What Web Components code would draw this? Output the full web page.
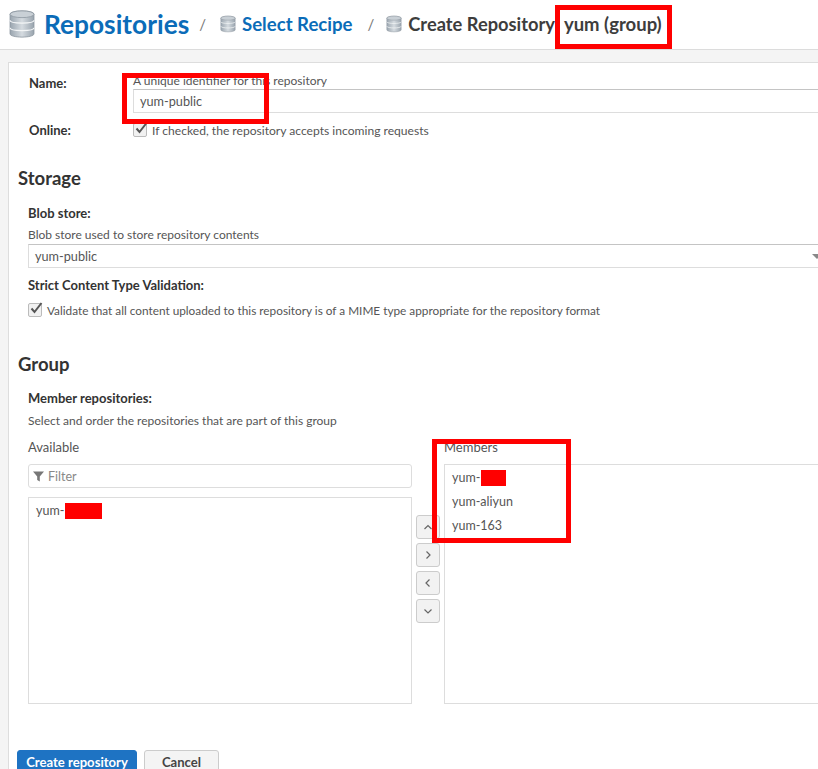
<!DOCTYPE html>
<html>
<head>
<meta charset="utf-8">
<title>Create Repository</title>
<style>
  html, body { margin: 0; padding: 0; height: 769px; overflow: hidden; background: #fff; }
  body { font-family: "Lato", "Liberation Sans", sans-serif; color: #444; }
</style>
</head>
<body>
<repo-page></repo-page>

<script>
const DB_ICON = `
  <svg viewBox="0 0 36 40" width="100%" height="100%">
    <defs>
      <linearGradient id="g" x1="0" x2="1" y1="0" y2="0">
        <stop offset="0" stop-color="#9aa5af"/><stop offset="0.5" stop-color="#d5dbe0"/><stop offset="1" stop-color="#99a4ae"/>
      </linearGradient>
    </defs>
    <path d="M2 7 C2 1 34 1 34 7 V33 C34 39 2 39 2 33 Z" fill="url(#g)" stroke="#8a949d" stroke-width="1"/>
    <ellipse cx="18" cy="7" rx="16" ry="4.5" fill="#c9d0d6" stroke="#8a949d"/>
    <path d="M2 15 C2 20 34 20 34 15 M2 25 C2 30 34 30 34 25" fill="none" stroke="#f4f6f7" stroke-width="1.6"/>
  </svg>`;

class RepoCrumb extends HTMLElement {
  constructor() {
    super();
    this.attachShadow({ mode: "open" });
  }
  connectedCallback() {
    const size = this.getAttribute("icon") || "18";
    this.shadowRoot.innerHTML = `
      <style>
        :host { display: inline-flex; align-items: center; gap: var(--crumb-gap, 5px); font-weight: 700; white-space: nowrap; }
        .icon { width: ${size}px; height: ${size}px; display: block; flex: none; }
      </style>
      <span class="icon">${DB_ICON}</span><slot></slot>`;
  }
}
customElements.define("repo-crumb", RepoCrumb);

class RepoHeader extends HTMLElement {
  constructor() {
    super();
    this.attachShadow({ mode: "open" });
    this.shadowRoot.innerHTML = `
      <style>
        :host { display: flex; align-items: center; height: 50px; padding: 0 0 2px 7px; box-sizing: border-box; border-bottom: 1px solid #dcdcdc; background: #fff; white-space: nowrap; }
        .root { font-size: 26.3px; color: #0b6cb8; --crumb-gap: 7px; }
        .link { font-size: 18.6px; color: #0b6cb8; }
        .cur { font-size: 18.3px; color: #3d3d3d; }
        .sep { color: #777; font-size: 15px; }
        .s1 { margin: 0 13px 0 10px; }
        .s2 { margin: 0 11px 0 15px; }
        .kind { margin-left: 9px; font-size: 18.5px; font-weight: 700; color: #3d3d3d; }
      </style>
      <repo-crumb class="root" icon="30">Repositories</repo-crumb>
      <span class="sep s1">/</span>
      <repo-crumb class="link">Select Recipe</repo-crumb>
      <span class="sep s2">/</span>
      <repo-crumb class="cur">Create Repository</repo-crumb>
      <span class="kind">yum (group)</span>`;
  }
}
customElements.define("repo-header", RepoHeader);

class RepoCheck extends HTMLElement {
  constructor() {
    super();
    this.attachShadow({ mode: "open" });
    this.shadowRoot.innerHTML = `
      <style>
        :host { display: flex; align-items: center; gap: 5px; font-size: 12.1px; color: #555; height: 16px; white-space: nowrap; }
        .box { width: 12px; height: 12px; border: 1px solid #bbb; border-radius: 2px; background: #f1f1f1; position: relative; flex: none; }
        svg { position: absolute; left: 0; top: -3px; }
      </style>
      <span class="box"><svg width="14" height="14" viewBox="0 0 14 14"><path d="M2.5 7.5 L5.5 11 L12.5 2" fill="none" stroke="#555" stroke-width="2"/></svg></span>
      <span><slot></slot></span>`;
  }
}
customElements.define("repo-check", RepoCheck);

class RepoTransfer extends HTMLElement {
  constructor() {
    super();
    this.attachShadow({ mode: "open" });
    const arrow = (d) => `<button><svg width="10" height="10" viewBox="0 0 10 10"><path d="${d}" fill="none" stroke="#666" stroke-width="1.2"/></svg></button>`;
    this.shadowRoot.innerHTML = `
      <style>
        :host { display: grid; grid-template-columns: 384px 32px 1fr; margin-right: -20px; font-size: 12.5px; color: #555; }
        .head { height: 18px; line-height: 18px; margin-bottom: 8px; font-size: 13px; }
        .filter { height: 24px; box-sizing: border-box; border: 1px solid #ddd; border-radius: 3px; display: flex; align-items: center; gap: 4px; padding-left: 4px; color: #888; margin-bottom: 9px; }
        .list { border: 1px solid #ddd; box-sizing: border-box; padding: 1px 0; }
        .left .list { height: 207px; }
        .right .list { height: 240px; }
        .item { height: 24px; line-height: 24px; padding-left: 7px; }
        .mask { display: inline-block; height: 16px; margin-left: 1px; background: #f00; vertical-align: -4px; }
        .btns { display: flex; flex-direction: column; gap: 4px; padding: 77px 0 0 4px; }
        button { width: 24px; height: 24px; padding: 0; border: 1px solid #ccc; border-radius: 3px; background: #f2f2f2; display: flex; align-items: center; justify-content: center; }
      </style>
      <div class="left">
        <div class="head">Available</div>
        <div class="filter">
          <svg width="11" height="11" viewBox="0 0 11 11"><path d="M0 0.5 H11 L6.8 5.5 V10.5 L4.2 9 V5.5 Z" fill="#777"/></svg>
          <span>Filter</span>
        </div>
        <div class="list"><div class="item">yum-<span class="mask" style="width:37px"></span></div></div>
      </div>
      <div class="btns">
        ${arrow("M1.5 7 L5 3.5 L8.5 7")}
        ${arrow("M3.5 1.5 L7 5 L3.5 8.5")}
        ${arrow("M6.5 1.5 L3 5 L6.5 8.5")}
        ${arrow("M1.5 3.5 L5 7 L8.5 3.5")}
      </div>
      <div class="right">
        <div class="head">Members</div>
        <div class="list">
          <div class="item">yum-<span class="mask" style="width:25px"></span></div>
          <div class="item">yum-aliyun</div>
          <div class="item">yum-163</div>
        </div>
      </div>`;
  }
}
customElements.define("repo-transfer", RepoTransfer);

class RepoButton extends HTMLElement {
  constructor() {
    super();
    this.attachShadow({ mode: "open" });
    this.shadowRoot.innerHTML = `
      <style>
        :host { display: inline-flex; align-items: center; justify-content: center; height: 24px; box-sizing: border-box; padding: 0 8px; border: 1px solid #ccc; border-radius: 3px; background: #f4f4f4; color: #444; font-size: 13.1px; font-weight: 700; white-space: nowrap; }
        :host([primary]) { background: #1e73c3; border-color: #1e73c3; color: #fff; }
      </style>
      <slot></slot>`;
  }
}
customElements.define("repo-button", RepoButton);

class RepoForm extends HTMLElement {
  constructor() {
    super();
    this.attachShadow({ mode: "open" });
    this.shadowRoot.innerHTML = `
      <style>
        :host { display: block; }
        .band { background: #f4f4f4; padding: 12px 0 0 8px; height: 719px; box-sizing: border-box; overflow: hidden; }
        .panel { background: #fff; border: 1px solid #ddd; border-right: 0; height: 900px; box-sizing: border-box; padding: 0 0 0 8px; font-size: 12px; color: #555; }
        b { display: block; color: #333; font-size: 13px; font-weight: 700; line-height: 16px; }
        h2 { margin: 0; padding-left: 1px; font-size: 18.5px; font-weight: 700; color: #333; line-height: 22px; }
        .top { display: grid; grid-template-columns: 104px 1fr; padding: 10px 0 0 12px; row-gap: 9px; }
        .top b { padding-top: 2px; }
        .help { line-height: 16px; }
        .input { height: 24px; box-sizing: border-box; border: 1px solid #ddd; border-top-color: #c4c4c4; margin-right: -20px; padding-left: 6px; line-height: 22px; font-size: 12.7px; position: relative; }
        .caret { position: absolute; right: 15px; top: 9px; width: 0; height: 0; border: 5px solid transparent; border-top: 5px solid #888; border-bottom: 0; }
        .sec { padding-left: 11px; }
        .storage { margin-top: 29px; }
        .group { margin-top: 35px; }
        .actions { display: flex; gap: 7px; margin-top: 46px; }
        .create { width: 120px; }
        .cancel { width: 75px; }
      </style>
      <div class="band">
        <div class="panel">
          <div class="top">
            <b>Name:</b>
            <div>
              <div class="help">A unique identifier for this repository</div>
              <div class="input">yum-public</div>
            </div>
            <b style="padding-top:0">Online:</b>
            <repo-check>If checked, the repository accepts incoming requests</repo-check>
          </div>

          <h2 class="storage">Storage</h2>
          <div class="sec">
            <b style="margin-top:16px">Blob store:</b>
            <div class="help" style="margin:6px 0 1px">Blob store used to store repository contents</div>
            <div class="input">yum-public<span class="caret"></span></div>
            <b style="margin-top:9px">Strict Content Type Validation:</b>
            <repo-check style="margin-top:9px;font-size:11.8px">Validate that all content uploaded to this repository is of a MIME type appropriate for the repository format</repo-check>
          </div>

          <h2 class="group">Group</h2>
          <div class="sec">
            <b style="margin-top:15px">Member repositories:</b>
            <div class="help" style="margin-top:7px;margin-bottom:9px">Select and order the repositories that are part of this group</div>
            <repo-transfer></repo-transfer>
          </div>
          <div class="actions">
            <repo-button class="create" primary>Create repository</repo-button>
            <repo-button class="cancel">Cancel</repo-button>
          </div>
        </div>
      </div>`;
  }
}
customElements.define("repo-form", RepoForm);

class RepoPage extends HTMLElement {
  constructor() {
    super();
    this.attachShadow({ mode: "open" });
    this.shadowRoot.innerHTML = `
      <style>
        :host { display: block; position: relative; width: 818px; height: 769px; overflow: hidden; }
        .mark { position: absolute; box-sizing: border-box; border: 5px solid #f00; }
      </style>
      <repo-header></repo-header>
      <repo-form></repo-form>
      <div class="mark" style="left:122px;top:73px;width:147px;height:51px"></div>
      <div class="mark" style="left:555px;top:5px;width:117px;height:44px"></div>
      <div class="mark" style="left:432px;top:439px;width:139px;height:104px"></div>`;
  }
}
customElements.define("repo-page", RepoPage);
</script>
</body>
</html>
